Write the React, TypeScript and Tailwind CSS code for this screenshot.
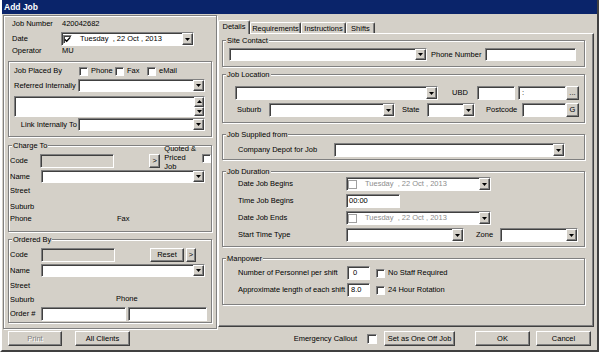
import React from 'react';

// classic win32 bevels
const sunk = 'border border-t-[#808080] border-l-[#808080] border-b-white border-r-white shadow-[inset_1px_1px_0_#404040]';
const raised = 'border border-t-white border-l-white border-b-[#404040] border-r-[#404040] shadow-[inset_-1px_-1px_0_#808080]';
const etched = 'border border-[#808080] shadow-[inset_1px_1px_0_#fff,1px_1px_0_#fff]';

function Tri({ up = false }: { up?: boolean }) {
  return (
    <svg width="5" height="3" viewBox="0 0 5 3">
      <path d={up ? 'M2.5 0 5 3H0Z' : 'M0 0h5L2.5 3Z'} fill="#000" />
    </svg>
  );
}

function DropBtn() {
  return (
    <div className={`w-[11px] self-stretch shrink-0 bg-[#d4d0c8] flex items-center justify-center ${raised}`}>
      <Tri />
    </div>
  );
}

function Combo({ className = '' }: { className?: string }) {
  return (
    <div className={`flex shrink-0 bg-white ${sunk} ${className}`}>
      <div className="flex-1" />
      <DropBtn />
    </div>
  );
}

function Field({ className = '', children }: { className?: string; children?: React.ReactNode }) {
  return <div className={`flex items-center shrink-0 bg-white ${sunk} ${className}`}>{children}</div>;
}

function Check({ checked = false, dim = false, className = '' }: { checked?: boolean; dim?: boolean; className?: string }) {
  return (
    <div
      className={`w-[9px] h-[9px] shrink-0 bg-white flex items-center justify-center ${
        dim ? 'border border-[#a0a0a0]' : sunk
      } ${className}`}
    >
      {checked && (
        <svg width="7" height="7" viewBox="0 0 7 7">
          <path d="M0.8 3.4 2.7 5.3 6.2 1.4" stroke="#000" strokeWidth="1.4" fill="none" />
        </svg>
      )}
    </div>
  );
}

function Picker({ disabled = false, className = '' }: { disabled?: boolean; className?: string }) {
  return (
    <div className={`flex items-center shrink-0 bg-white ${sunk} ${className}`}>
      <Check checked={!disabled} dim={disabled} className="ml-[1px]" />
      <span className={`ml-[8px] flex-1 whitespace-pre ${disabled ? 'text-[#8c8c8c]' : ''}`}>Tuesday  , 22 Oct , 2013</span>
      <DropBtn />
    </div>
  );
}

function Btn({ className = '', disabled = false, children }: { className?: string; disabled?: boolean; children: React.ReactNode }) {
  return (
    <div
      className={`flex items-center justify-center shrink-0 whitespace-nowrap bg-[#d4d0c8] ${raised} ${
        disabled ? 'text-[#808080] [text-shadow:1px_1px_0_#fff]' : ''
      } ${className}`}
    >
      {children}
    </div>
  );
}

function Group({ label, className = '', children }: { label?: string; className?: string; children: React.ReactNode }) {
  return (
    <div className={`relative flex flex-col shrink-0 ${etched} ${className}`}>
      {label && (
        <span className="absolute left-[3px] top-[-5px] px-[1px] leading-[10px] bg-[#d4d0c8]">{label}</span>
      )}
      {children}
    </div>
  );
}

function LeftPanel() {
  return (
    <div className={`ml-[1px] mt-[1px] w-[214px] h-[314px] flex flex-col ${etched}`}>
      <div className="mt-[2px] h-[12px] pl-[8px] flex items-center">
        <span className="w-[50px]">Job Number</span>
        <span>420042682</span>
      </div>
      <div className="mt-[2px] h-[14px] pl-[8px] flex items-center">
        <span className="w-[49px]">Date</span>
        <Picker className="w-[133px] h-[14px]" />
      </div>
      <div className="h-[10px] pl-[8px] flex items-center">
        <span className="w-[50px]">Operator</span>
        <span>MU</span>
      </div>

      <Group className="mt-[5px] ml-[4px] w-[204px] h-[76px]">
        <div className="mt-[3px] h-[12px] pl-[5px] flex items-center">
          <span className="w-[65px]">Job Placed By</span>
          <div className="w-[36px] flex items-center">
            <Check />
            <span className="ml-[3px]">Phone</span>
          </div>
          <div className="w-[32px] flex items-center">
            <Check />
            <span className="ml-[3px]">Fax</span>
          </div>
          <div className="flex items-center">
            <Check />
            <span className="ml-[3px]">eMail</span>
          </div>
        </div>
        <div className="mt-[2px] h-[13px] pl-[5px] flex items-center">
          <span className="w-[64px]">Referred Internally</span>
          <Combo className="w-[127px] h-[13px]" />
        </div>
        <div className={`ml-[5px] mt-[4px] w-[191px] h-[21px] flex bg-white ${sunk}`}>
          <div className="flex-1" />
          <div className="flex flex-col w-[10px]">
            <div className={`flex-1 flex items-center justify-center bg-[#d4d0c8] ${raised}`}>
              <Tri up />
            </div>
            <div className={`flex-1 flex items-center justify-center bg-[#d4d0c8] ${raised}`}>
              <Tri />
            </div>
          </div>
        </div>
        <div className="mt-[1px] h-[13px] pl-[5px] flex items-center">
          <span className="w-[64px] text-right pr-[1px]">Link Internally To</span>
          <Combo className="w-[127px] h-[13px]" />
        </div>
      </Group>

      <Group label="Charge To" className="mt-[8px] ml-[4px] w-[204px] h-[87px]">
        <div className="mt-[8px] h-[14px] pl-[1px] flex items-center">
          <span className="w-[31px]">Code</span>
          <Field className="w-[74px] h-[14px] !bg-[#d4d0c8]" />
          <Btn className="ml-[35px] w-[11px] h-[14px]">&gt;</Btn>
          <div className="relative z-10 ml-[4px] self-start -mt-[10px] shrink-0 whitespace-nowrap flex flex-col leading-[9px]">
            <span>Quoted &amp;</span>
            <span>Priced</span>
            <span>Job</span>
          </div>
          <Check className="ml-[6px] self-start" />
        </div>
        <div className="mt-[2px] h-[13px] pl-[1px] flex items-center">
          <span className="w-[31px]">Name</span>
          <Combo className="w-[164px] h-[13px]" />
        </div>
        <div className="mt-[2px] h-[12px] pl-[1px] flex items-center">Street</div>
        <div className="mt-[4px] h-[12px] pl-[1px] flex items-center">Suburb</div>
        <div className="h-[12px] pl-[1px] flex items-center">
          <span className="w-[107px]">Phone</span>
          <span>Fax</span>
        </div>
      </Group>

      <Group label="Ordered By" className="mt-[7px] ml-[4px] w-[204px] h-[84px]">
        <div className="mt-[8px] h-[14px] pl-[1px] flex items-center">
          <span className="w-[31px]">Code</span>
          <Field className="w-[74px] h-[14px] !bg-[#d4d0c8]" />
          <Btn className="ml-[35px] w-[34px] h-[14px]">Reset</Btn>
          <Btn className="ml-[2px] w-[10px] h-[14px]">&gt;</Btn>
        </div>
        <div className="mt-[2px] h-[13px] pl-[1px] flex items-center">
          <span className="w-[31px]">Name</span>
          <Combo className="w-[164px] h-[13px]" />
        </div>
        <div className="mt-[3px] h-[12px] pl-[1px] flex items-center">Street</div>
        <div className="mt-[2px] h-[12px] pl-[1px] flex items-center">
          <span className="w-[106px]">Suburb</span>
          <span className="-mt-[3px]">Phone</span>
        </div>
        <div className="mt-[1px] h-[14px] pl-[1px] flex items-center">
          <span className="w-[31px]">Order #</span>
          <Field className="w-[85px] h-[14px]" />
          <Field className="ml-[2px] w-[79px] h-[14px]" />
        </div>
      </Group>
    </div>
  );
}

function DetailsPane() {
  return (
    <div className={`-mt-[1px] ml-[1px] w-[376px] h-[294px] flex flex-col ${raised}`}>
      <Group label="Site Contact" className="mt-[6px] ml-[3px] w-[363px] h-[27px]">
        <div className="mt-[7px] pl-[6px] h-[13px] flex items-center">
          <Combo className="w-[198px] h-[13px]" />
          <span className="w-[58px] pl-[4px]">Phone Number</span>
          <Field className="w-[91px] h-[13px]" />
        </div>
      </Group>

      <Group label="Job Location" className="mt-[7px] ml-[3px] w-[363px] h-[49px]">
        <div className="mt-[11px] pl-[12px] h-[14px] flex items-center">
          <Combo className="w-[203px] h-[14px]" />
          <span className="w-[39px] pl-[14px]">UBD</span>
          <Field className="w-[38px] h-[14px]" />
          <Field className="ml-[3px] w-[48px] h-[14px] pl-[3px]">:</Field>
          <Btn className="w-[13px] h-[14px]">...</Btn>
        </div>
        <div className="mt-[3px] pl-[12px] h-[14px] flex items-center">
          <span className="w-[34px] pl-[2px]">Suburb</span>
          <Combo className="w-[126px] h-[14px]" />
          <span className="w-[32px] pl-[7px]">State</span>
          <Combo className="w-[48px] h-[14px]" />
          <span className="w-[47px] pl-[11px]">Postcode</span>
          <Field className="w-[44px] h-[14px]" />
          <Btn className="w-[13px] h-[14px]">G</Btn>
        </div>
      </Group>

      <Group label="Job Supplied from" className="mt-[11px] ml-[3px] w-[363px] h-[26px]">
        <div className="mt-[8px] pl-[15px] h-[14px] flex items-center">
          <span className="w-[96px]">Company Depot for Job</span>
          <Combo className="w-[231px] h-[14px]" />
        </div>
      </Group>

      <Group label="Job Duration" className="mt-[11px] ml-[3px] w-[363px] h-[76px]">
        <div className="mt-[5px] pl-[15px] h-[14px] flex items-center">
          <span className="w-[108px]">Date Job Begins</span>
          <Picker disabled className="w-[145px] h-[14px]" />
        </div>
        <div className="mt-[3px] pl-[15px] h-[14px] flex items-center">
          <span className="w-[108px]">Time Job Begins</span>
          <Field className="w-[54px] h-[14px] pl-[2px]">00:00</Field>
        </div>
        <div className="mt-[3px] pl-[15px] h-[14px] flex items-center">
          <span className="w-[108px]">Date Job Ends</span>
          <Picker disabled className="w-[145px] h-[14px]" />
        </div>
        <div className="mt-[3px] pl-[15px] h-[14px] flex items-center">
          <span className="w-[108px]">Start Time Type</span>
          <Combo className="w-[118px] h-[14px]" />
          <span className="w-[36px] pl-[12px]">Zone</span>
          <Combo className="w-[78px] h-[14px]" />
        </div>
      </Group>

      <Group label="Manpower" className="mt-[11px] ml-[3px] w-[363px] h-[47px]">
        <div className="mt-[7px] pl-[15px] h-[14px] flex items-center">
          <span className="w-[109px]">Number of Personnel per shift</span>
          <Field className="w-[23px] h-[14px] pl-[5px]">0</Field>
          <Check className="ml-[6px]" />
          <span className="ml-[3px]">No Staff Required</span>
        </div>
        <div className="mt-[3px] pl-[15px] h-[14px] flex items-center">
          <span className="w-[109px]">Approximate length of each shift</span>
          <Field className="w-[23px] h-[14px] pl-[3px]">8.0</Field>
          <Check className="ml-[6px]" />
          <span className="ml-[3px]">24 Hour Rotation</span>
        </div>
      </Group>
    </div>
  );
}

function RightPanel() {
  const tab = 'border border-b-0 border-t-white border-l-white border-r-[#404040] rounded-t-[2px] shadow-[inset_-1px_0_0_#808080] bg-[#d4d0c8] flex items-center justify-center';
  return (
    <div className="flex flex-col">
      <div className="mt-[6px] ml-[1px] h-[14px] flex items-end">
        <div className={`relative z-10 h-[14px] w-[32px] pb-[1px] ${tab}`}>Details</div>
        <div className={`h-[12px] w-[51px] ${tab}`}>Requirements</div>
        <div className={`h-[12px] w-[45px] ${tab}`}>Instructions</div>
        <div className={`h-[12px] w-[29px] ${tab}`}>Shifts</div>
      </div>
      <DetailsPane />
    </div>
  );
}

export default function App() {
  return (
    <div className="w-[599px] h-[352px] flex flex-col overflow-hidden bg-[#d4d0c8] border-x-2 border-b-2 border-l-white border-r-[#404040] border-b-[#404040] font-['Liberation_Sans',Arial,sans-serif] text-[7.5px] leading-[12px] text-black">
      <div className="h-[14px] shrink-0 bg-[#0a246a] text-white font-bold text-[8.5px] flex items-center pl-[2px]">Add Job</div>
      <div className="h-[316px] shrink-0 flex">
        <LeftPanel />
        <RightPanel />
      </div>
      <div className="h-[20px] shrink-0 pt-[1px] flex items-start">
        <Btn disabled className="ml-[6px] w-[54px] h-[15px]">Print</Btn>
        <Btn className="ml-[13px] w-[55px] h-[15px]">All Clients</Btn>
        <div className="ml-auto mr-[6px] h-[15px] flex items-center">
          <span>Emergency Callout</span>
          <Check className="ml-[10px] !w-[10px] !h-[10px]" />
          <Btn className="ml-[7px] w-[71px] h-[15px]">Set as One Off Job</Btn>
          <Btn className="ml-[20px] w-[55px] h-[15px]">OK</Btn>
          <Btn className="ml-[6px] w-[55px] h-[15px]">Cancel</Btn>
        </div>
      </div>
    </div>
  );
}
